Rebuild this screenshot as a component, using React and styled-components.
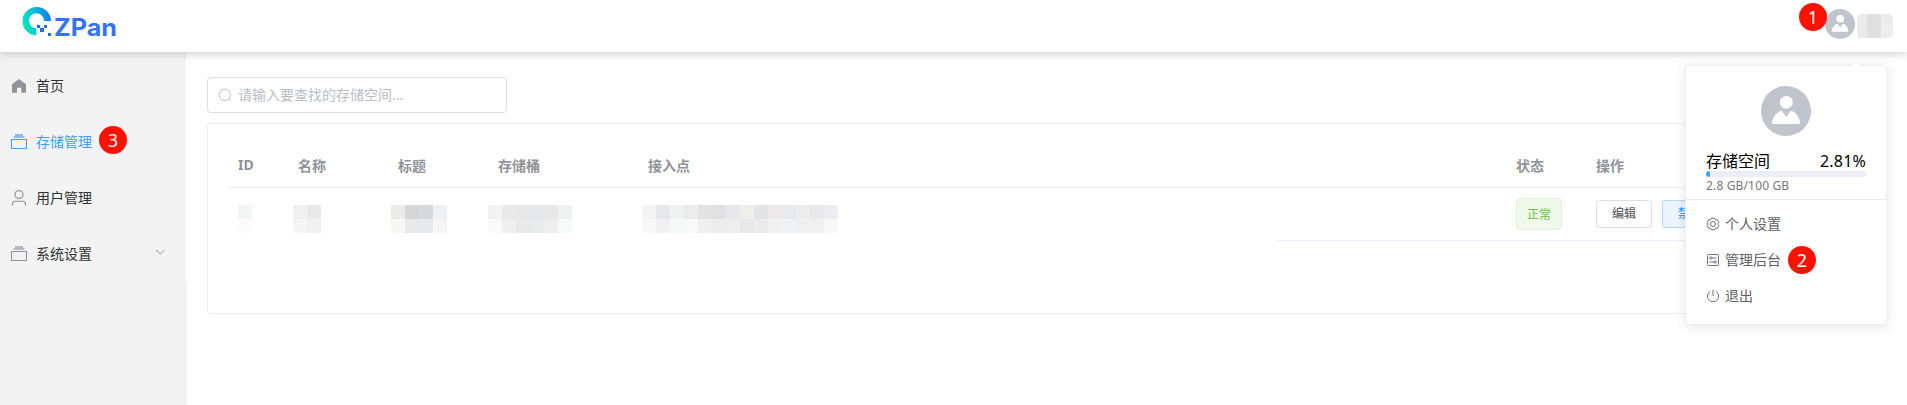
import React from "react";
import styled, { createGlobalStyle } from "styled-components";

const Global = createGlobalStyle`
  * { box-sizing: border-box; }
  body { margin: 0; background: #fff; font-family: "Noto Sans", "Noto Sans CJK SC", sans-serif; font-size: 14px; color: #303133; overflow: hidden; }
  svg { display: block; flex: none; }
`;

const Page = styled.div`
  height: 405px;
  display: flex;
  flex-direction: column;
`;
const Header = styled.header`
  position: relative;
  z-index: 1;
  height: 52px;
  flex: none;
  display: flex;
  justify-content: space-between;
  align-items: flex-start;
  background: #fff;
  box-shadow: 0 2px 8px rgba(0, 0, 0, 0.18);
`;
const Brand = styled.div`
  display: flex;
  padding: 6px 0 0 21px;
`;
const BrandName = styled.svg`
  overflow: visible;
`;
const UserArea = styled.div`
  display: flex;
  padding-right: 14px;
`;
const HeaderAvatar = styled.div`
  margin: 9px 2px 0 -2px;
`;
const Badge = styled.span`
  position: relative;
  z-index: 2;
  flex: none;
  width: 28px;
  height: 28px;
  margin: ${(p) => p.$margin || "0"};
  border-radius: 50%;
  background: #fe1100;
  color: #fff;
  font-size: 18px;
  line-height: 28px;
  text-align: center;
`;
const Mosaic = styled.div`
  display: grid;
  grid-template-columns: repeat(${(p) => p.$cols}, 14px);
  grid-auto-rows: 14px;
  margin-top: 10px;
  margin-left: ${(p) => p.$shift || 0}px;
`;
const Cell = styled.i`
  background: ${(p) => p.$tone};
`;
const UserName = styled.div`
  display: grid;
  grid-template-columns: 10px 14px 12px;
  grid-template-rows: 10px 14px;
  margin-top: 14px;
  border-radius: 5px;
  overflow: hidden;
`;

const Body = styled.div`
  flex: 1;
  display: flex;
  min-height: 0;
`;
const Sidebar = styled.aside`
  width: 187px;
  flex: none;
  background: #f3f3f3;
  padding-top: 6px;
`;
const Menu = styled.nav`
  border-right: 1px solid #fff;
`;
const MenuItem = styled.div`
  height: 56px;
  padding: 0 20px 0 9px;
  display: flex;
  align-items: center;
  color: ${(p) => (p.$active ? "#409eff" : "#303133")};
  > svg:first-child {
    color: ${(p) => (p.$active ? "#409eff" : "#909399")};
    margin-right: 7px;
  }
`;
const MenuLabel = styled.span`
  padding-bottom: 2px;
`;
const Chevron = styled.svg`
  margin: -4px 0 0 auto;
  color: #909399;
`;

const Main = styled.main`
  flex: 1;
  padding: 25px 20px 0;
`;
const Search = styled.div`
  width: 300px;
  height: 36px;
  padding: 0 0 1px 10px;
  display: flex;
  align-items: center;
  gap: 6px;
  border: 1px solid #dcdfe6;
  border-radius: 4px;
  color: #b9bec8;
`;
const Placeholder = styled.span`
  padding-bottom: 1px;
`;
const Card = styled.section`
  width: 1680px;
  height: 191px;
  margin-top: 10px;
  padding: 20px;
  border: 1px solid #ebeef0;
  border-radius: 4px;
`;
const Row = styled.div`
  display: grid;
  grid-template-columns: 60px 100px 100px 150px 868px 80px 1fr;
  align-items: center;
  height: ${(p) => p.$height}px;
`;
const HeadRow = styled(Row)`
  padding-bottom: 2px;
  border-bottom: 1px solid #ebeef0;
  color: #909399;
  font-weight: 700;
`;
const Rule = styled.div`
  height: 1px;
  margin-left: 1047px;
  background: #ebeef5;
`;
const Td = styled.div`
  padding-left: 10px;
  display: flex;
  align-items: center;
  gap: 10px;
`;
const Tag = styled.span`
  width: 46px;
  height: 32px;
  border: 1px solid #e1f3d8;
  border-radius: 4px;
  background: #f0f9eb;
  color: #67c23a;
  font-size: 12px;
  line-height: 32px;
  text-align: center;
`;
const Button = styled.button`
  width: 56px;
  height: 28px;
  padding: 0;
  border: 1px solid ${(p) => (p.$primary ? "#b3d8ff" : "#dcdfe6")};
  border-radius: 3px;
  background: ${(p) => (p.$primary ? "#ecf5ff" : "#fff")};
  color: ${(p) => (p.$primary ? "#409eff" : "#606266")};
  font: 500 12px/26px "Noto Sans", "Noto Sans CJK SC", sans-serif;
`;

const Popover = styled.div`
  position: absolute;
  top: 65px;
  right: 20px;
  width: 202px;
  height: 260px;
  border: 1px solid #ebeef5;
  border-radius: 4px;
  background: #fff;
  box-shadow: 0 2px 12px rgba(0, 0, 0, 0.1);
`;
const Arrow = styled.svg`
  position: absolute;
  top: -6px;
  right: 24px;
`;
const Profile = styled.div`
  height: 134px;
  padding: 20px 20px 0;
  border-bottom: 1px solid #e8eaee;
  > svg { margin: 0 auto; }
`;
const Usage = styled.div`
  display: flex;
  justify-content: space-between;
  margin-top: 16px;
  font-size: 16px;
  line-height: 19px;
  color: #000;
`;
const Percent = styled.span`
  letter-spacing: 0.2px;
`;
const Track = styled.div`
  height: 6px;
  border-radius: 3px;
  background: #ebeef5;
  overflow: hidden;
`;
const Fill = styled.div`
  width: 2.81%;
  height: 6px;
  border-radius: 3px;
  background: #409eff;
`;
const Quota = styled.div`
  font-size: 12px;
  line-height: 18px;
  letter-spacing: 0.15px;
  color: #777;
`;
const Actions = styled.div`
  padding: 6px 20px;
`;
const Action = styled.div`
  height: 36px;
  display: flex;
  align-items: center;
  gap: 5px;
  color: #606266;
`;
const ActionLabel = styled.span`
  padding-bottom: 2px;
`;

const Avatar = ({ size }) => (
  <svg width={size} height={size} viewBox="0 0 50 50">
    <circle cx="25" cy="25" r="25" fill="#c0c4cc" />
    <circle cx="25.3" cy="16.3" r="6.4" fill="#fff" />
    <path d="M11 38c0-6 4-11.500 9.500-13.500L25.300 31l4.800-6.500C35.500 26.500 39 32 39 38z" fill="#fff" />
  </svg>
);

const HomeIcon = () => (
  <svg width="20" height="16" viewBox="0 0 20 16">
    <path d="M10 1 17 6.300V14.800H12.300V9.800H8V14.800H3V6.300z" fill="currentColor" />
  </svg>
);
const BoxIcon = () => (
  <svg width="20" height="18" viewBox="0 0 20 18" fill="none" stroke="currentColor">
    <path d="M2.500 6.500h15v9h-15z" strokeWidth="1.100" />
    <path d="M4.500 4h11M6 2h8" strokeWidth="1.300" opacity=".8" />
  </svg>
);
const UserIcon = () => (
  <svg width="20" height="18" viewBox="0 0 20 18" fill="none" stroke="currentColor" strokeWidth="1.150">
    <circle cx="10" cy="5.600" r="4" />
    <path d="M3.500 16.500v-1.300a3 3 0 0 1 3-3h7a3 3 0 0 1 3 3v1.300" />
  </svg>
);
const SearchIcon = () => (
  <svg width="14" height="14" viewBox="0 0 14 14" fill="none" stroke="currentColor" strokeWidth="1">
    <circle cx="6.800" cy="6.800" r="5.600" />
    <path d="m10.900 10.900 1.600 1.600" />
  </svg>
);
const GearIcon = () => (
  <svg width="14" height="14" viewBox="0 0 14 14" fill="none" stroke="currentColor" strokeWidth=".9">
    <path d="M5.300 1.200h3.400l.7 1.600 1.800-.2 1.700 2.900L11.800 7l1.100 1.500-1.700 2.900-1.800-.2-.7 1.600H5.300l-.7-1.600-1.800.2-1.700-2.900L2.200 7 1.100 5.500l1.700-2.900 1.800.2z" strokeLinejoin="round" />
    <circle cx="7" cy="7" r="2.500" />
  </svg>
);
const PanelIcon = () => (
  <svg width="14" height="14" viewBox="0 0 14 14" fill="none" stroke="currentColor" strokeWidth=".9">
    <rect x="1.500" y="1.500" width="11" height="11" rx="1" />
    <path d="M6 5h4.500M3.500 9H8" />
    <circle cx="4.800" cy="5" r="1.200" />
    <circle cx="9.200" cy="9" r="1.200" />
  </svg>
);
const PowerIcon = () => (
  <svg width="14" height="14" viewBox="0 0 14 14" fill="none" stroke="currentColor" strokeWidth=".9">
    <path d="M7 1v6M4.400 2.200a5.600 5.600 0 1 0 5.200 0" />
  </svg>
);

const Logo = () => (
  <svg width="32" height="32" viewBox="0 0 32 32">
    <defs>
      <linearGradient id="ring" x1="0" y1="0.600" x2="1" y2="0.300">
        <stop offset="0" stopColor="#00eab8" />
        <stop offset=".45" stopColor="#0cc4d8" />
        <stop offset="1" stopColor="#1677ee" />
      </linearGradient>
    </defs>
    <path d="M15.300 29.500A14.300 14.300 0 1 1 30 15H23a7.500 7.500 0 1 0-7.700 7.300z" fill="url(#ring)" />
    <path d="M16 19h3v3h-3zM19 22h4v4h-4zM23 19h3v3h-3zM27 27h3v3h-3z" fill="#1f72dc" />
  </svg>
);

const pixels = {
  id: ["#f3f5f5", "#fcfcfc"],
  name: ["#f1f1f1", "#e9e9e9", "#f5f5f5", "#f1f1f1"],
  title: ["#edebe8", "#d6d6d6", "#d8d9dc", "#f0f1f5", "#f7f7f4", "#e9e9e9", "#e7e9eb", "#f5f5f5"],
  bucket: ["#f3f3f3", "#e8eae9", "#e8e8e8", "#e7e8eb", "#e8e8e8", "#f0f2f1", "#fafafa", "#efefef", "#e9e9e9", "#e9ebea", "#eeeeee", "#f8faf9"],
  endpoint: [
    "#f4f4f4", "#e5e7ea", "#f0f2f1", "#ebedec", "#e2e2e2", "#e1e1e1", "#e6e8eb", "#eeeeeb", "#e2e4e8", "#ece9ea", "#e9eaee", "#ededed", "#e9e9e9", "#ecedf0",
    "#f8f8f8", "#f1f1f1", "#f7f9f8", "#f8f9f9", "#efefef", "#ededed", "#eeeeee", "#e9e9e9", "#ebebeb", "#f1f1f1", "#f1f2f5", "#f0f0f0", "#f0f0f0", "#f8f8f8",
  ],
  user: ["#ebecec", "#dfdfdf", "#ebebed", "#e9eaea", "#e0e0e0", "#eceef0"],
};
const Redacted = ({ tones, shift }) => (
  <Mosaic $cols={tones.length / 2} $shift={shift}>
    {tones.map((t, i) => <Cell key={i} $tone={t} />)}
  </Mosaic>
);

export default function App() {
  return (
    <Page>
      <Global />
      <Header>
        <Brand>
          <Logo />
          <BrandName width="70" height="42">
            <text x="1" y="29.800" fontFamily="Inter, sans-serif" fontWeight="700" fontSize="24" fill="#3374f6" textLength="63" lengthAdjust="spacingAndGlyphs">ZPan</text>
          </BrandName>
        </Brand>
        <UserArea>
          <Badge $margin="3px 0 0">1</Badge>
          <HeaderAvatar><Avatar size={30} /></HeaderAvatar>
          <UserName>{pixels.user.map((t, i) => <Cell key={i} $tone={t} />)}</UserName>
        </UserArea>
      </Header>
      <Body>
        <Sidebar>
          <Menu>
            <MenuItem><HomeIcon /><MenuLabel>首页</MenuLabel></MenuItem>
            <MenuItem $active><BoxIcon /><MenuLabel>存储管理</MenuLabel><Badge $margin="-4px 0 0 7px">3</Badge></MenuItem>
            <MenuItem><UserIcon /><MenuLabel>用户管理</MenuLabel></MenuItem>
            <MenuItem>
              <BoxIcon /><MenuLabel>系统设置</MenuLabel>
              <Chevron width="12" height="8" viewBox="0 0 12 8" fill="none" stroke="currentColor"><path d="m2 2 4.200 4L10.500 2" /></Chevron>
            </MenuItem>
          </Menu>
        </Sidebar>
        <Main>
          <Search><SearchIcon /><Placeholder>请输入要查找的存储空间...</Placeholder></Search>
          <Card>
            <HeadRow $height={44}>
              {["ID", "名称", "标题", "存储桶", "接入点", "状态", "操作"].map((t) => <Td key={t}>{t}</Td>)}
            </HeadRow>
            <Row $height={52}>
              <Td><Redacted tones={pixels.id} /></Td>
              <Td><Redacted tones={pixels.name} shift={-5} /></Td>
              <Td><Redacted tones={pixels.title} shift={-7} /></Td>
              <Td><Redacted tones={pixels.bucket} shift={-10} /></Td>
              <Td><Redacted tones={pixels.endpoint} shift={-6} /></Td>
              <Td><Tag>正常</Tag></Td>
              <Td><Button>编辑</Button><Button $primary>禁用</Button></Td>
            </Row>
            <Rule />
          </Card>
        </Main>
      </Body>
      <Popover>
        <Arrow width="12" height="7" viewBox="0 0 12 7"><path d="M0 6.500 6 .5l6 6" fill="#fff" stroke="#ebeef5" /></Arrow>
        <Profile>
          <Avatar size={50} />
          <Usage><span>存储空间</span><Percent>2.81%</Percent></Usage>
          <Track><Fill /></Track>
          <Quota>2.8 GB/100 GB</Quota>
        </Profile>
        <Actions>
          <Action><GearIcon /><ActionLabel>个人设置</ActionLabel></Action>
          <Action><PanelIcon /><ActionLabel>管理后台</ActionLabel><Badge $margin="0 0 0 2px">2</Badge></Action>
          <Action><PowerIcon /><ActionLabel>退出</ActionLabel></Action>
        </Actions>
      </Popover>
    </Page>
  );
}
